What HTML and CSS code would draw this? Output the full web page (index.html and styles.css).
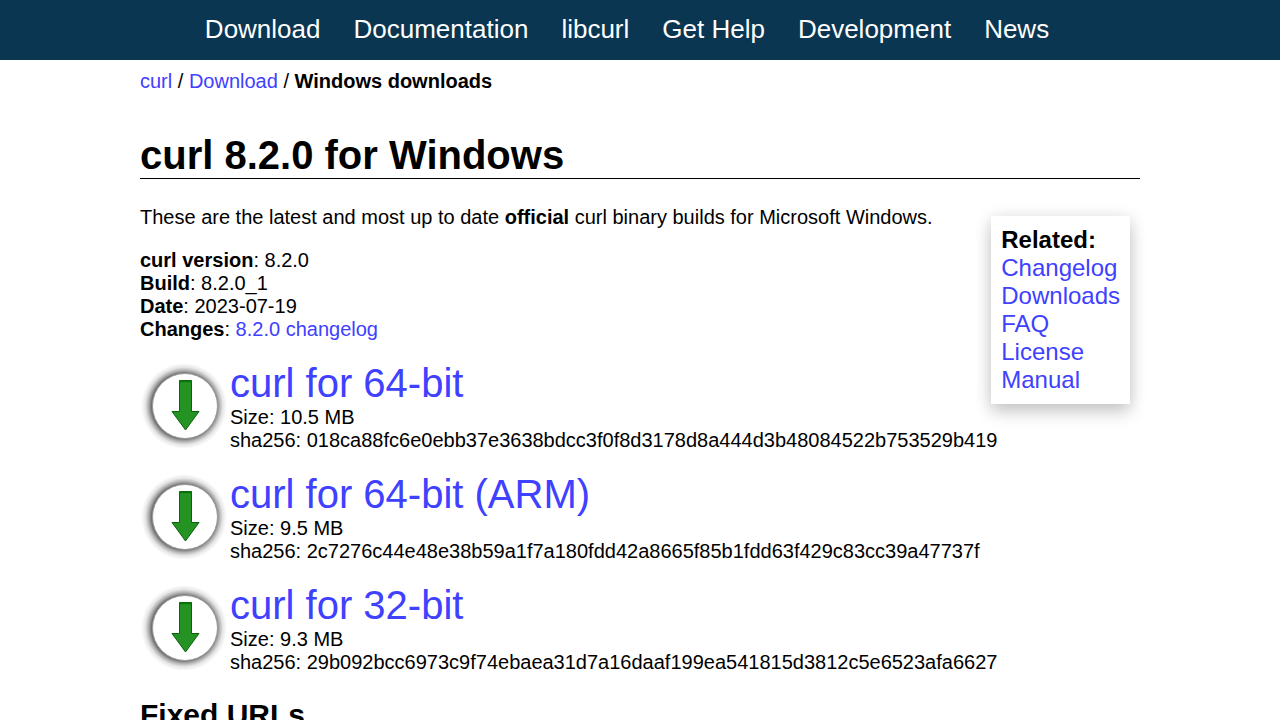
FILE: index.html
```html
<!DOCTYPE html>
<html lang="en">
<head>
<meta charset="utf-8">
<meta name="viewport" content="width=device-width, initial-scale=1">
<title>curl for Windows</title>
<link rel="stylesheet" href="styles.css">
</head>
<body>
<svg class="sprite" aria-hidden="true">
  <defs>
    <radialGradient id="halo">
      <stop offset="0.76" stop-color="#000" stop-opacity="0.55"/>
      <stop offset="0.82" stop-color="#000" stop-opacity="0.32"/>
      <stop offset="0.9" stop-color="#000" stop-opacity="0.1"/>
      <stop offset="1" stop-color="#000" stop-opacity="0"/>
    </radialGradient>
    <symbol id="download" viewBox="0 0 90 90">
      <circle cx="44" cy="45" r="43" fill="url(#halo)"/>
      <circle cx="45" cy="45" r="32.5" fill="#fff" stroke="#999" stroke-width="1"/>
      <path d="M39.5 19.5h12v31h7.5l-13.5 18.500l-13.500-18.500h7.500z" fill="#249324" stroke="#0b630b" stroke-width="1"/>
      <path d="M40 20.500h11" stroke="#087808" stroke-width="1.500"/>
    </symbol>
  </defs>
</svg>
<header class="topbar">
  <nav class="menu" aria-label="Main">
    <a href="#">Download</a>
    <a href="#">Documentation</a>
    <a href="#">libcurl</a>
    <a href="#">Get Help</a>
    <a href="#">Development</a>
    <a href="#">News</a>
  </nav>
</header>
<main class="content">
  <nav class="breadcrumb" aria-label="Breadcrumb"><a href="#">curl</a> / <a href="#">Download</a> / <b>Windows downloads</b></nav>
  <h1 class="title">curl 8.2.0 for Windows</h1>
  <aside class="related">
    <b>Related:</b>
    <a href="#">Changelog</a>
    <a href="#">Downloads</a>
    <a href="#">FAQ</a>
    <a href="#">License</a>
    <a href="#">Manual</a>
  </aside>
  <p class="text">These are the latest and most up to date <b>official</b> curl binary builds for Microsoft Windows.</p>
  <p class="text"><b>curl version</b>: 8.2.0<br><b>Build</b>: 8.2.0_1<br><b>Date</b>: 2023-07-19<br><b>Changes</b>: <a href="#">8.2.0 changelog</a></p>
  <section class="package">
    <svg class="package-icon" aria-hidden="true"><use href="#download"/></svg>
    <div class="package-info">
      <a class="package-link" href="#">curl for 64-bit</a>
      <div>Size: 10.5 MB</div>
      <div>sha256: 018ca88fc6e0ebb37e3638bdcc3f0f8d3178d8a444d3b48084522b753529b419</div>
    </div>
  </section>
  <section class="package">
    <svg class="package-icon" aria-hidden="true"><use href="#download"/></svg>
    <div class="package-info">
      <a class="package-link" href="#">curl for 64-bit (ARM)</a>
      <div>Size: 9.5 MB</div>
      <div>sha256: 2c7276c44e48e38b59a1f7a180fdd42a8665f85b1fdd63f429c83cc39a47737f</div>
    </div>
  </section>
  <section class="package">
    <svg class="package-icon" aria-hidden="true"><use href="#download"/></svg>
    <div class="package-info">
      <a class="package-link" href="#">curl for 32-bit</a>
      <div>Size: 9.3 MB</div>
      <div>sha256: 29b092bcc6973c9f74ebaea31d7a16daaf199ea541815d3812c5e6523afa6627</div>
    </div>
  </section>
  <h2 class="subtitle">Fixed URLs</h2>
</main>
</body>
</html>
```
FILE: styles.css
```css
body {
  margin: 0;
  background: #fff;
  color: #000;
  font: 20px/23px "Liberation Sans", Arial, sans-serif;
}

a {
  color: #4040ff;
  text-decoration: none;
}

.sprite {
  position: absolute;
  width: 0;
  height: 0;
}

.topbar {
  background: #0a3651;
  padding: 14px 26px 16px 0;
}

.menu {
  display: flex;
  flex-wrap: wrap;
  justify-content: center;
  gap: 0 33px;
  font-size: 26px;
  line-height: 30px;
}

.menu a {
  color: #fff;
}

.content {
  max-width: 1000px;
  margin: 0 auto;
  padding: 10px 10px 0;
}

.title {
  margin: 39px 0 27px;
  border-bottom: 1px solid #000;
  font-size: 40px;
  line-height: 46px;
}

/* The negative bottom margin lets the first package keep its full width. */
.related {
  display: flex;
  flex-direction: column;
  float: right;
  margin: 10px 10px -60px 20px;
  padding: 10px;
  background: #fff;
  box-shadow: 0 8px 16px rgba(0, 0, 0, 0.2), 0 0 16px rgba(0, 0, 0, 0.08);
  font-size: 24px;
  line-height: 28px;
}

.text {
  margin: 0 0 20px;
}

.package {
  display: flex;
  margin-bottom: 20px;
}

.package-icon {
  flex: none;
  width: 90px;
  height: 90px;
}

.package-info {
  min-width: 0;
  overflow-wrap: anywhere;
}

.package-link {
  display: block;
  font-size: 40px;
  line-height: 45px;
}

.subtitle {
  margin: 24px 0;
  font-size: 30px;
  line-height: 34px;
}
```
